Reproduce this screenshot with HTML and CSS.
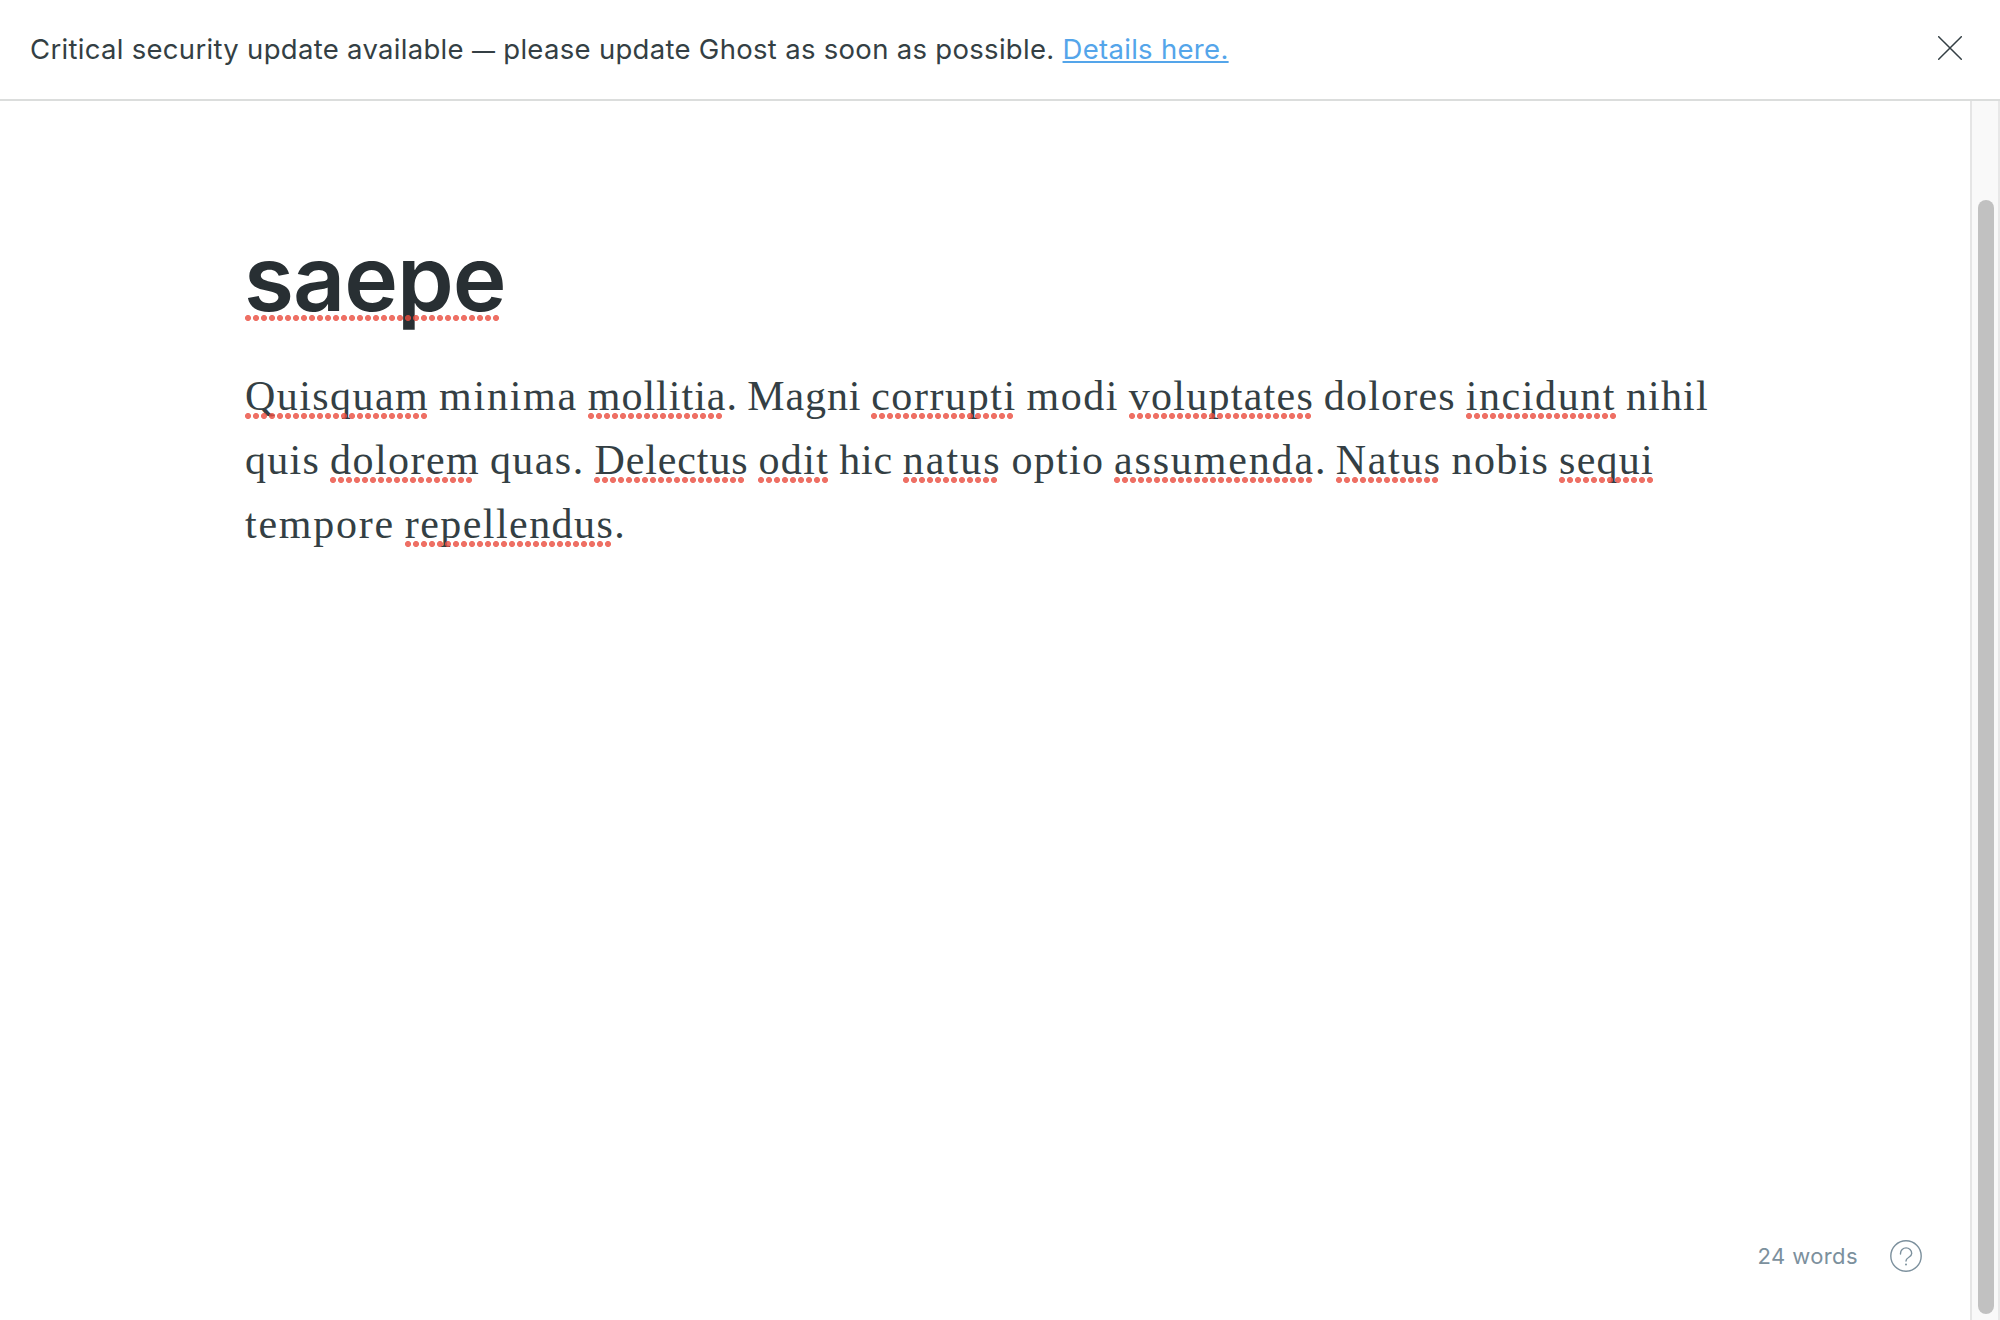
FILE: index.html
```html
<!DOCTYPE html>
<html lang="en">
<head>
<meta charset="utf-8">
<title>Editor - Ghost</title>
<link rel="stylesheet" href="styles.css">
</head>
<body>
<div class="app">
  <header class="alert">
    <p class="alert-text">Critical security update available <span class="dash">—</span> please update Ghost as soon as possible. <a class="alert-link" href="#">Details here.</a></p>
    <button class="alert-close" aria-label="Close">
      <svg width="24" height="24" viewBox="0 0 24 24" fill="none" stroke="#343f44" stroke-width="1.5" stroke-linecap="round"><path d="M.7.7l22.6 22.6M23.3.7L.7 23.3"/></svg>
    </button>
  </header>
  <div class="main">
    <main class="editor">
      <article class="post">
        <h1 class="title"><span class="miss">saepe</span></h1>
        <p class="body"><span class="miss">Quisquam</span> <span>minima</span> <span class="miss">mollitia</span><span>.</span> <span>Magni</span> <span class="miss">corrupti</span> <span>modi</span> <span class="miss">voluptates</span> <span>dolores</span> <span class="miss">incidunt</span> <span>nihil</span><br>
        <span>quis</span> <span class="miss">dolorem</span> <span>quas.</span> <span class="miss">Delectus</span> <span class="miss">odit</span> <span>hic</span> <span class="miss">natus</span> <span>optio</span> <span class="miss">assumenda</span><span>.</span> <span class="miss">Natus</span> <span>nobis</span> <span class="miss">sequi</span><br>
        <span>tempore</span> <span class="miss">repellendus</span><span>.</span></p>
      </article>
      <footer class="status">
        <span class="count">24 words</span>
        <svg class="help" width="32" height="32" viewBox="0 0 32 32" fill="none" stroke="#7c909d" stroke-width="1.4"><circle cx="16" cy="16" r="15.2"/><path d="M10.500 14v-.5a5.600 5.600 0 0 1 11.200 0c0 4-5.700 3.500-5.700 7.600" stroke-linecap="round"/><circle cx="16" cy="24.600" r="1" fill="#7c909d" stroke="none"/></svg>
      </footer>
    </main>
    <div class="scrollbar"><div class="thumb"></div></div>
  </div>
</div>
<script src="script.js"></script>
</body>
</html>
```
FILE: styles.css
```css
* { box-sizing: border-box; }
body { margin: 0; background: #fff; color: #343f44; font-family: Inter, sans-serif; }
.app { height: 1320px; display: flex; flex-direction: column; overflow: hidden; }
.alert { height: 101px; flex: none; display: flex; align-items: center; justify-content: space-between; padding: 0 38px 0 30px; border-bottom: 2px solid #dbdddc; }
.alert-text { margin: 0 0 2px; font-size: 27.5px; line-height: 40px; letter-spacing: 0.3px; white-space: nowrap; }
.dash { font-size: 23px; line-height: 1; }
.alert-link { color: #54a5ea; text-decoration: underline; text-decoration-thickness: 2px; text-underline-offset: 2px; text-decoration-skip-ink: none; }
.alert-close { margin-bottom: 3px; padding: 0; border: 0; background: none; display: flex; }
.main { flex: 1; display: flex; min-height: 0; }
.editor { flex: 1; display: flex; flex-direction: column; justify-content: space-between; }
.post { padding: 122px 0 0 245px; }
.title { margin: 0 0 0 -1px; font-size: 91px; font-weight: 600; line-height: 110px; letter-spacing: -1px; color: #282f33; }
.body { margin: 31px 0 0; font-family: "Liberation Serif", serif; font-size: 42px; line-height: 64px; word-spacing: -0.66px; white-space: nowrap; }
.body span { letter-spacing: var(--tracking, 1.3px); }
.miss { position: relative; display: inline-block; }
.miss::after { content: ""; position: absolute; left: 0; bottom: 9px; width: round(down, 100% + 1.8px, 8px); height: 6px; background: radial-gradient(circle at 3px 3px, rgba(234, 76, 62, .8) 2.7px, transparent 3.3px) 0 0 / 8px 6px repeat-x; }
.title .miss::after { left: 1px; bottom: 12px; width: 256px; }
.status { display: flex; align-items: center; justify-content: flex-end; gap: 32px; padding: 0 48px 48px 0; color: #7c909d; }
.count { font-size: 22px; line-height: 32px; letter-spacing: 0.4px; }
.help { display: block; }
.scrollbar { width: 30px; padding: 99px 4px 6px 6px; background: #f9f9f9; border-left: 2px solid #e5e5e5; border-right: 2px solid #e8e8e8; }
.thumb { width: 16px; height: 100%; border-radius: 8px; background: #c1c1c1; }
```
FILE: script.js
```js
// Tracks each word of the body text to the advance widths of a 40px Georgia setting.
const advances = {
  a: 504, b: 560, c: 454, d: 575, e: 484, g: 509, h: 582, i: 293, l: 287, m: 880,
  n: 591, o: 539, p: 571, q: 560, r: 410, s: 432, t: 346, u: 576, v: 497,
  '.': 270, Q: 744, M: 927, D: 750, N: 767
};
const context = document.createElement('canvas').getContext('2d');
context.font = '42px "Liberation Serif"';
document.querySelectorAll('.body span').forEach((word) => {
  const letters = [...word.textContent];
  const target = letters.reduce((sum, letter) => sum + advances[letter] * 0.04 + 0.2, 0);
  const tracking = (target - context.measureText(word.textContent).width) / letters.length;
  word.style.setProperty('--tracking', tracking.toFixed(3) + 'px');
});
```
